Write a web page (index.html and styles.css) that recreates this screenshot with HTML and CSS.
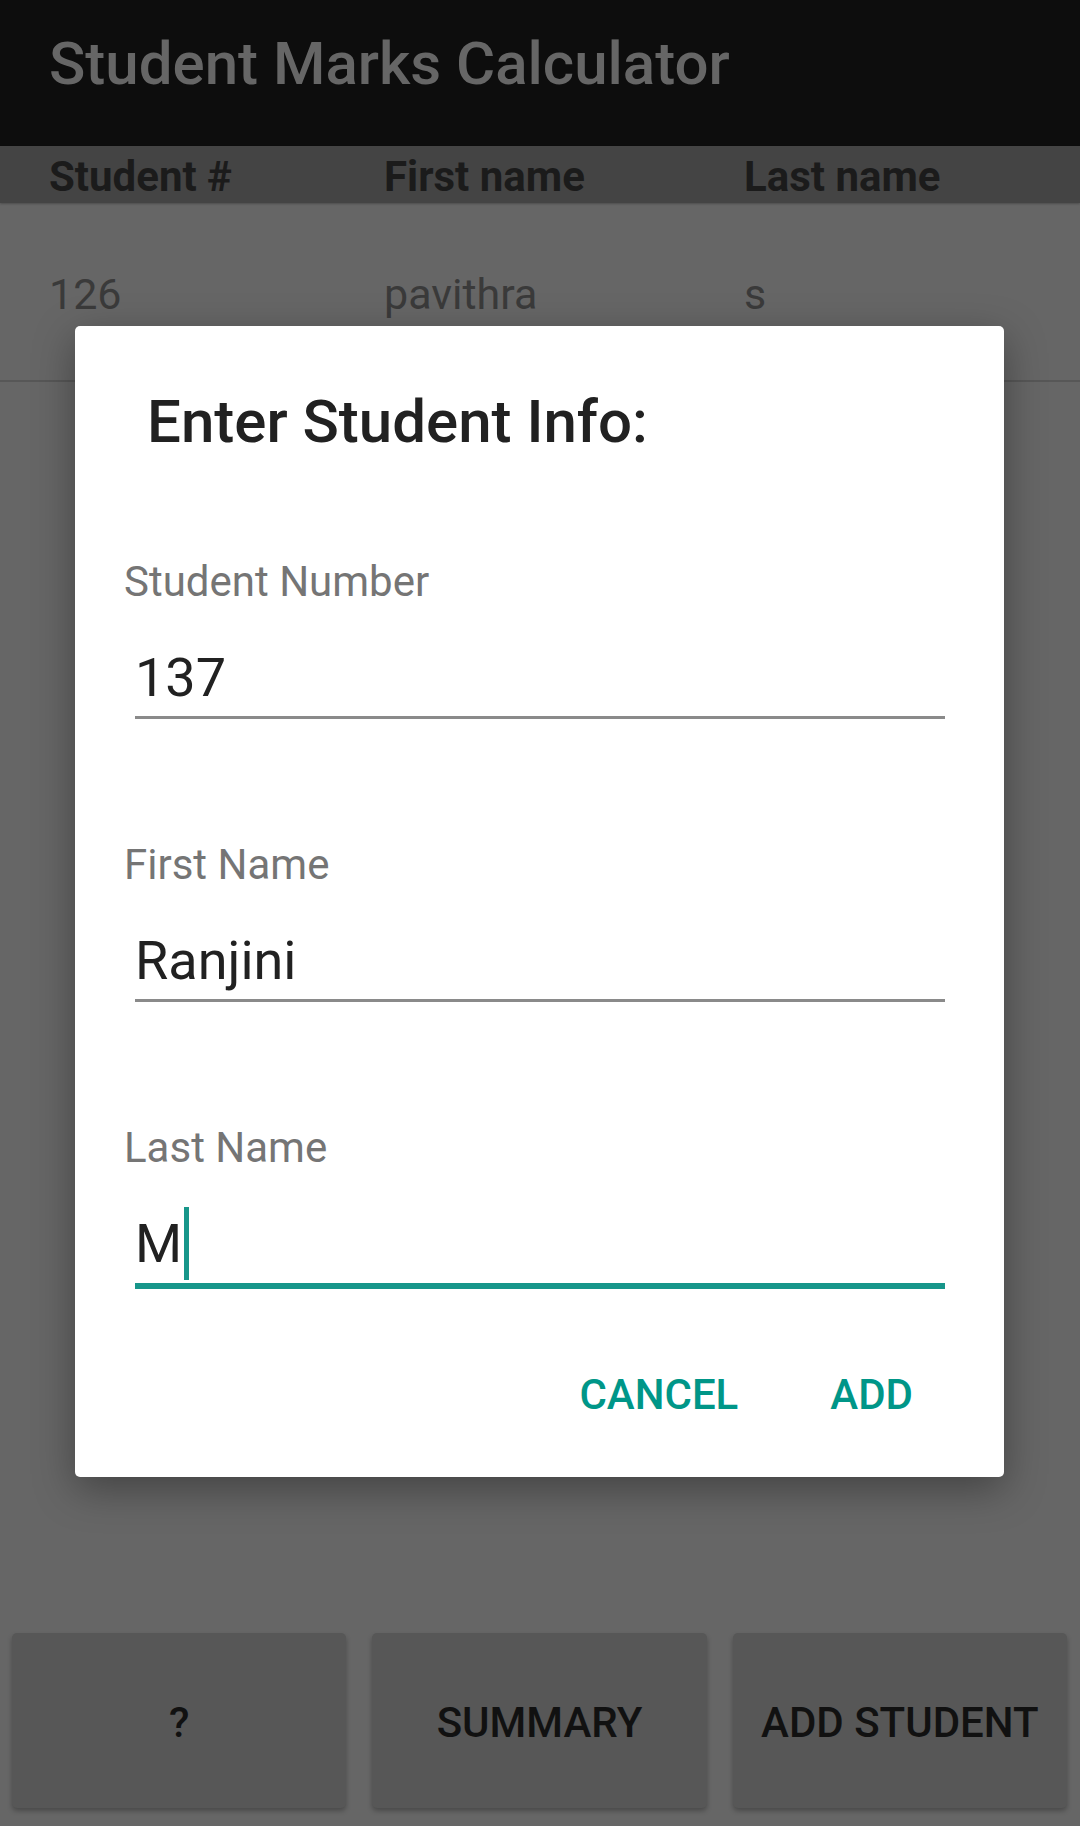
FILE: index.html
```html
<!DOCTYPE html>
<html>
<head>
<meta charset="utf-8">
<link rel="stylesheet" href="styles.css">
</head>
<body>
<div class="app">
  <header class="appbar"><h1 class="appbar-title">Student Marks Calculator</h1></header>
  <div class="thead">
    <span>Student #</span><span>First name</span><span>Last name</span>
  </div>
  <div class="trow">
    <span>126</span><span>pavithra</span><span>s</span>
  </div>
  <div class="spacer"></div>
  <div class="actions">
    <button class="action">?</button>
    <button class="action">SUMMARY</button>
    <button class="action">ADD STUDENT</button>
  </div>
</div>

<div class="dialog">
  <h2 class="dialog-title">Enter Student Info:</h2>
  <div class="field">
    <div class="field-label">Student Number</div>
    <div class="field-input">137</div>
  </div>
  <div class="field">
    <div class="field-label">First Name</div>
    <div class="field-input">Ranjini</div>
  </div>
  <div class="field field-focused">
    <div class="field-label">Last Name</div>
    <div class="field-input">M<span class="cursor"></span></div>
  </div>
  <div class="dialog-actions">
    <span class="dlg-btn">CANCEL</span>
    <span class="dlg-btn">ADD</span>
  </div>
</div>
</body>
</html>
```
FILE: styles.css
```css
* { box-sizing: border-box; }
html, body { margin: 0; padding: 0; }
body {
  width: 1080px;
  height: 1826px;
  overflow: hidden;
  font-family: Roboto, "Noto Sans", sans-serif;
  background: #666666;
  position: relative;
}
.app {
  height: 1826px;
  display: flex;
  flex-direction: column;
}
.appbar {
  height: 146px;
  background: #0d0d0d;
  padding: 34px 0 0 49px;
  flex: none;
}
.appbar-title {
  margin: 0;
  font-size: 60px;
  line-height: 1;
  font-weight: 500;
  color: #666666;
}
.thead {
  height: 57px;
  background: #444444;
  display: grid;
  grid-template-columns: 335px 360px 1fr;
  padding: 4px 0 0 49px;
  align-items: center;
  font-size: 42px;
  font-weight: 700;
  color: #1b1b1b;
  box-shadow: 0 1px 2px rgba(0,0,0,0.25);
  flex: none;
}
.trow {
  height: 179px;
  display: grid;
  grid-template-columns: 335px 360px 1fr;
  padding: 4px 0 0 49px;
  align-items: center;
  font-size: 43px;
  color: #3a3a3a;
  border-bottom: 2px solid #575757;
  flex: none;
}
.spacer { flex: 1; }
.actions {
  display: grid;
  grid-template-columns: repeat(3, 1fr);
  gap: 26px;
  padding: 0 13px 18px 12px;
  flex: none;
}
.action {
  height: 175px;
  border: none;
  border-radius: 5px;
  background: #575757;
  box-shadow: 0 3px 5px rgba(0,0,0,0.28);
  font-family: Roboto, sans-serif;
  font-size: 42px;
  font-weight: 500;
  color: #111111;
  padding: 4px 0 0;
}

.dialog {
  position: absolute;
  left: 75px;
  top: 326px;
  width: 929px;
  height: 1151px;
  background: #ffffff;
  border-radius: 5px;
  box-shadow: 0 12px 40px rgba(0,0,0,0.35);
  padding: 0 59px 0 49px;
}
.dialog-title {
  margin: 0;
  padding: 66px 0 0 23px;
  font-size: 60px;
  line-height: 1;
  font-weight: 500;
  color: #212121;
}
.dialog-title + .field { margin-top: 109px; }
.field + .field { margin-top: 125px; }
.field-label {
  font-size: 42px;
  line-height: 1;
  color: #757575;
}
.field-input {
  margin: 48px 0 0 11px;
  height: 68px;
  font-size: 54px;
  line-height: 1;
  color: #212121;
  padding-bottom: 12px;
  border-bottom: 3px solid #8a8a8a;
  display: flex;
  align-items: center;
}
.field-focused .field-input {
  height: 72px;
  padding-bottom: 13px;
  border-bottom: 6px solid #17968a;
}
.cursor {
  display: inline-block;
  width: 5px;
  height: 73px;
  margin: -10px 0 -9px 2px;
  background: #17968a;
}
.dialog-actions {
  display: flex;
  justify-content: flex-end;
  gap: 92px;
  padding: 85px 32px 0 0;
}
.dlg-btn {
  font-size: 42px;
  line-height: 1;
  font-weight: 500;
  color: #009688;
}
```
